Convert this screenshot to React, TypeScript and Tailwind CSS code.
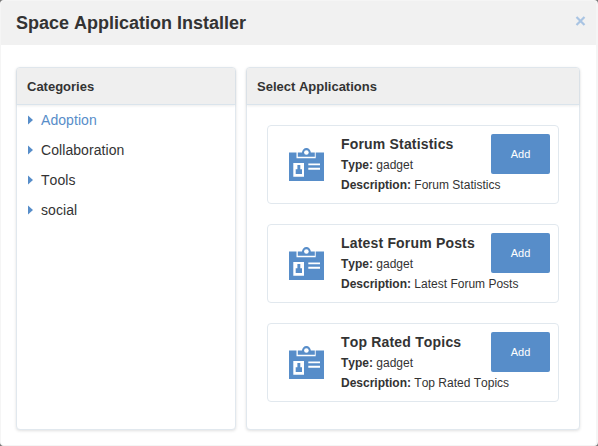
const categories = ["Adoption", "Collaboration", "Tools", "social"];
const applications = ["Forum Statistics", "Latest Forum Posts", "Top Rated Topics"];

function BadgeIcon() {
  return (
    <svg width="35" height="34" viewBox="0 0 35 34" className="block shrink-0">
      <path fill="#578dc9" d="M0 4.500h7.500v5.800h19.200V4.500H35V33H0z" />
      <path fill="#578dc9" d="M8.800 4.500h4.200a4.400 4.400 0 0 1 8.800 0h4V8.800h-17z" />
      <circle cx="17.400" cy="4.500" r="2.300" fill="#fff" />
      <path fill="#fff" d="M4.300 15H15v13.700H4.300zM19.300 15.500H31v1.800H19.300zM19.300 19.800H31v1.900H19.300z" />
      <path fill="#578dc9" d="M8.400 17h2.900v4.500H8.400zM6.700 21.300H13v4.700H6.700z" />
    </svg>
  );
}

function ApplicationCard({ name }: { name: string }) {
  return (
    <li className="flex h-[79px] rounded border border-[#e1e8ee] pt-2 pr-2 pl-[21px]">
      <div className="pt-[14px]">
        <BadgeIcon />
      </div>
      <div className="ml-[17px] w-[150px] whitespace-nowrap text-xs leading-5">
        <h3 className="mb-px text-[14px] font-bold leading-5 tracking-[0.18px]">{name}</h3>
        <p><strong>Type:</strong> gadget</p>
        <p><strong>Description:</strong> {name}</p>
      </div>
      <button className="h-10 w-[59px] shrink-0 rounded-[2px] bg-[#578dc9] text-[11px] text-white">Add</button>
    </li>
  );
}

const panel = "h-[363px] rounded border border-[#e1e8ee] bg-white shadow-[0_1px_3px_rgba(0,0,0,0.12)]";
const panelHeader = "h-[37px] rounded-t-[3px] border-b border-[#dae4ec] bg-[#efefef] pl-[10px] text-[13px] font-bold leading-[37px] shadow-[0_1px_3px_rgba(0,0,0,0.08)]";

export default function App() {
  return (
    <div className="h-[446px] w-[598px] overflow-hidden bg-[#777] font-['Liberation_Sans',Arial,sans-serif] text-[#333] [font-kerning:none]">
      <div className="h-full overflow-hidden rounded-[4px] border border-r-2 border-[#f5f5f5] bg-white">
        <header className="flex h-11 justify-between bg-[#f1f1f1] pr-[10px] pl-[15px]">
          <h2 className="text-lg font-bold leading-[45px]">Space Application Installer</h2>
          <button aria-label="Close" className="mt-[15px] h-[10px]">
            <svg width="11" height="10" viewBox="0 0 11 10">
              <path d="M1.500 1l8 8M9.500 1l-8 8" stroke="#a9c4e3" strokeWidth="2.200" />
            </svg>
          </button>
        </header>
        <main className="flex gap-[10px] pt-[22px] pl-[15px]">
          <section className={`w-[220px] ${panel}`}>
            <div className={panelHeader}>Categories</div>
            <ul>
              {categories.map((category, index) => (
                <li key={category} className={`flex h-[30px] items-center pl-[11px] text-sm tracking-[0.07px] ${index === 0 ? "text-[#578dc9]" : ""}`}>
                  <svg width="5" height="10" viewBox="0 0 5 10" className="mr-2">
                    <path d="M0 .5L5 5L0 9.500z" fill="#578dc9" />
                  </svg>
                  {category}
                </li>
              ))}
            </ul>
          </section>
          <section className={`w-[334px] ${panel}`}>
            <div className={panelHeader}>Select Applications</div>
            <ul className="flex flex-col gap-5 px-5 pt-5">
              {applications.map((name) => <ApplicationCard key={name} name={name} />)}
            </ul>
          </section>
        </main>
      </div>
    </div>
  );
}
